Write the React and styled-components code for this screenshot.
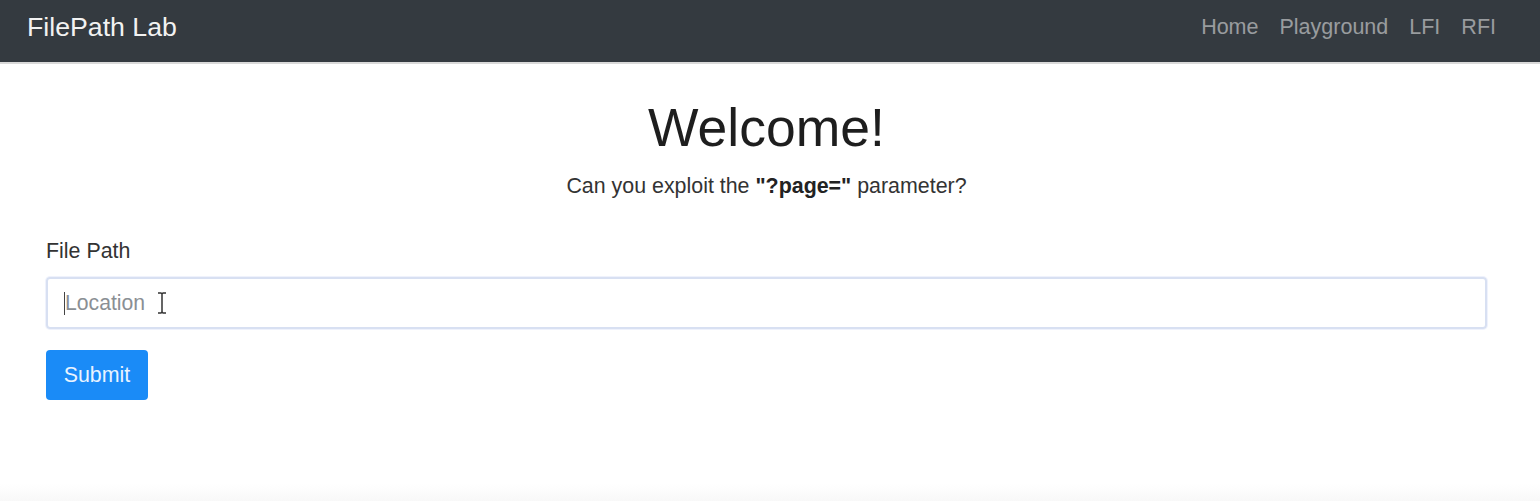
import { createGlobalStyle, styled } from "styled-components"

const Global = createGlobalStyle`
    html, body {
        margin: 0;
        padding: 0;
        background: #fff;
        font-family: "Liberation Sans", Arial, sans-serif;
        color: #212529;
    }
    #root {
        min-height: 501px;
        display: flex;
        flex-direction: column;
    }
`

const Navbar = styled.nav`
    height: 62px;
    background: #343a40;
    border-bottom: 2px solid #d9d9d9;
    display: flex;
    align-items: center;
    justify-content: space-between;
    padding: 0 44px 0 27px;
`

const Brand = styled.a`
    color: #f2f2f2;
    font-size: 26.7px;
    text-decoration: none;
    margin-top: -7px;
`

const NavLinks = styled.ul`
    display: flex;
    gap: 21px;
    list-style: none;
    margin: -7px 0 0;
    padding: 0;
`

const NavLink = styled.li`
    color: rgba(255, 255, 255, 0.5);
    font-size: 21.5px;
`

const Main = styled.main`
    flex: 1;
    padding: 0 53px 0 46px;
    background: linear-gradient(to bottom, #fff 0, #fff 420px, #f8f8f8 100%);
`

const Hero = styled.header`
    text-align: center;
    padding-top: 32px;
`

const Title = styled.h1`
    font-size: 53.5px;
    font-weight: 400;
    margin: 0;
    line-height: 64px;
    color: #1e1e1e;
`

const Lead = styled.p`
    font-size: 21.4px;
    margin: 14px 0 0;
    color: #333;
    b {
        color: #222;
    }
`

const Form = styled.form`
    margin-top: 40px;
    display: flex;
    flex-direction: column;
    align-items: flex-start;
`

const Label = styled.label`
    font-size: 21.4px;
    color: #333;
    margin-bottom: 13px;
`

const Field = styled.div`
    width: 100%;
    height: 52px;
    box-sizing: border-box;
    border: 2px solid #d8e0f2;
    border-radius: 4px;
    box-shadow: 0 0 0 1px rgba(120, 150, 230, 0.12);
    display: flex;
    align-items: center;
    padding-left: 16px;
`

const Caret = styled.span`
    width: 1px;
    height: 23px;
    background: #444;
`

const Placeholder = styled.span`
    font-size: 21.2px;
    color: #8a8f94;
`

const Button = styled.button`
    margin-top: 21px;
    width: 102px;
    height: 50px;
    border: none;
    border-radius: 4px;
    background: #1a8bf7;
    color: #e8f3ff;
    font-family: inherit;
    font-size: 21.4px;
`

const IBeam = () => (
    <svg width="10" height="22" viewBox="0 0 10 22" style={{ marginLeft: 12 }}>
        <path d="M1 1h3l1 1 1-1h3M5 2v18M1 21h3l1-1 1 1h3" stroke="#333" strokeWidth="1.5" fill="none" />
    </svg>
)

const App = () => {
    return (<>
        <Global />
        <Navbar>
            <Brand>FilePath Lab</Brand>
            <NavLinks>
                <NavLink>Home</NavLink>
                <NavLink>Playground</NavLink>
                <NavLink>LFI</NavLink>
                <NavLink>RFI</NavLink>
            </NavLinks>
        </Navbar>
        <Main>
            <Hero>
                <Title>Welcome!</Title>
                <Lead>Can you exploit the <b>"?page="</b> parameter?</Lead>
            </Hero>
            <Form onSubmit={(e) => e.preventDefault()}>
                <Label>File Path</Label>
                <Field>
                    <Caret />
                    <Placeholder>Location</Placeholder>
                    <IBeam />
                </Field>
                <Button type="submit">Submit</Button>
            </Form>
        </Main>
    </>)
}

export default App
